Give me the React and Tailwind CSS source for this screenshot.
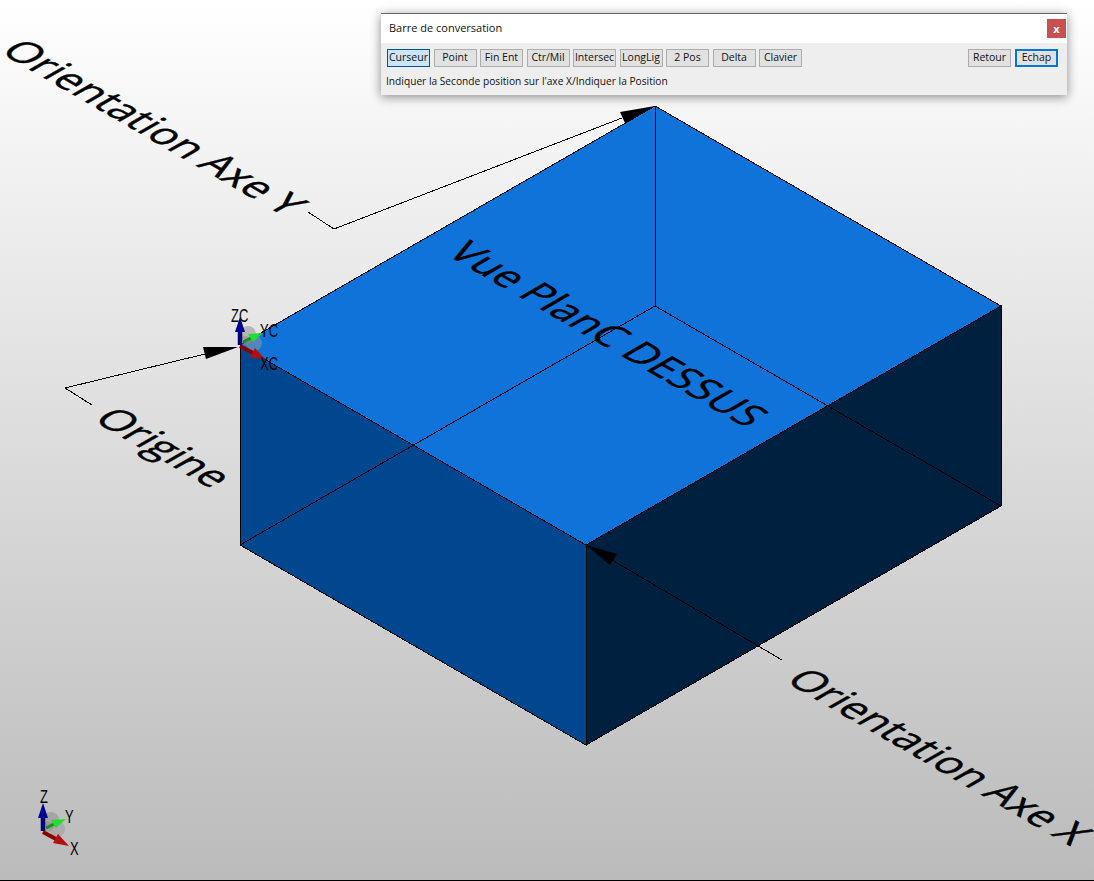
const buttons = ["Point", "Fin Ent", "Ctr/Mil", "Intersec", "LongLig", "2 Pos", "Delta", "Clavier"];

const Btn = ({ label, className = "" }) => (
  <div className={`w-[43px] h-[18px] flex items-center justify-center text-[10.5px] text-[#111] whitespace-nowrap ${className}`}>
    {label}
  </div>
);

const TriadText = ({ x, y, children }) => (
  <text transform={`translate(${x} ${y}) scale(0.72 1)`} fontSize="18" fontFamily="'Liberation Sans', sans-serif" fill="#000">
    {children}
  </text>
);

const Triad = ({ x, y, labels }) => (
  <g transform={`translate(${x} ${y})`}>
    <circle cx="8" cy="-11" r="8" fill="#8a8a8a" opacity="0.5" />
    <circle cx="14" cy="-2" r="8" fill="#9a9a9a" opacity="0.5" />
    <circle cx="5" cy="-4" r="5" fill="#8a8a8a" opacity="0.5" />
    <line x1="0" y1="0" x2="0" y2="-16" stroke="#00007a" strokeWidth="4.5" />
    <polygon points="0,-28 -5,-13 5,-13" fill="#000090" />
    <line x1="3" y1="-3" x2="13" y2="-8" stroke="#149414" strokeWidth="3" />
    <polygon points="23,-12 8,-11 13,-3" fill="#22dd33" />
    <line x1="0" y1="1" x2="13" y2="8" stroke="#8a0000" strokeWidth="4" />
    <polygon points="26,15 10,12 15,3" fill="#b01010" />
    <TriadText x={labels[0].x} y={labels[0].y}>{labels[0].t}</TriadText>
    <TriadText x={labels[1].x} y={labels[1].y}>{labels[1].t}</TriadText>
    <TriadText x={labels[2].x} y={labels[2].y}>{labels[2].t}</TriadText>
  </g>
);

// text lying in the isometric plane of the top face
const Label = ({ x, y, children }) => (
  <text
    transform={`matrix(0.866 0.5 -0.866 0.5 ${x} ${y})`}
    fontSize="40.5"
    fontFamily="'Open Sans', sans-serif"
    fill="#000"
    stroke="#000"
    strokeWidth="0.5"
  >
    {children}
  </text>
);

export default function App() {
  return (
    <div className="relative w-[1094px] h-[881px] overflow-hidden bg-gradient-to-b from-white to-[#bbbbbb] border-b border-black font-['Open_Sans',sans-serif]">
      <svg viewBox="0 0 1094 881" className="block w-[1094px] h-[881px]">
        <g shapeRendering="crispEdges">
          {/* Box faces */}
          <polygon points="240,345 655,106 1001,306 586,545" fill="#0f73da" stroke="#000" />
          <polygon points="240,345 586,545 586,745 240,545" fill="#00478f" stroke="#000" />
          <polygon points="586,545 1001,306 1001,506 586,745" fill="#00203f" stroke="#000" />
          {/* Hidden edges */}
          <line x1="655" y1="106" x2="655" y2="306" stroke="#000" />
          <line x1="655" y1="306" x2="240" y2="545" stroke="#000" />
          <line x1="655" y1="306" x2="1001" y2="506" stroke="#000" />

          {/* Leaders */}
          <polyline points="308,212 334,229 622,118" fill="none" stroke="#000" />
          <polyline points="92,405 65,388 205,354" fill="none" stroke="#000" />
          <polyline points="782,660 612,560" fill="none" stroke="#000" />
        </g>
        <polygon points="655,106 620,112 625,123" fill="#000" />
        <polygon points="238,347 203,347 206,359" fill="#000" />
        <polygon points="586,545 617,554 610,565" fill="#000" />

        <Label x={-1} y={52}>Orientation Axe Y</Label>
        <Label x={92} y={420}>Origine</Label>
        <Label x={784} y={681}>Orientation Axe X</Label>
        <Label x={445} y={254}>Vue PlanC DESSUS</Label>

        <Triad
          x={240}
          y={345}
          labels={[{ t: "ZC", x: -9, y: -23 }, { t: "YC", x: 20, y: -8 }, { t: "XC", x: 20, y: 25 }]}
        />
        <Triad
          x={43}
          y={831}
          labels={[{ t: "Z", x: -3, y: -28 }, { t: "Y", x: 22, y: -8 }, { t: "X", x: 27, y: 24 }]}
        />
      </svg>

      {/* Conversation bar */}
      <div className="absolute left-[381px] top-[13px] w-[686px] h-[82px] bg-[#eeeeee] border-t border-[#666] shadow-[0_2px_10px_rgba(0,0,0,0.45)]">
        <div className="h-[29px] bg-white flex items-center justify-between pl-2 pr-[1px]">
          <span className="text-[11px] text-[#111]">Barre de conversation</span>
          <div className="w-[19px] h-[19px] bg-[#c75050] flex items-center justify-center text-[11px] font-bold text-white leading-none">x</div>
        </div>
        <div className="flex items-center justify-between pl-[6px] pr-[9px] pt-[6px]">
          <div className="flex gap-[3.5px]">
            <Btn label="Curseur" className="bg-[#cce4f7] border border-[#005499]" />
            {buttons.map((b) => (
              <Btn key={b} label={b} className="bg-[#e1e1e1] border border-[#adadad]" />
            ))}
          </div>
          <div className="flex gap-[4px]">
            <Btn label="Retour" className="bg-[#e1e1e1] border border-[#adadad]" />
            <Btn label="Echap" className="bg-[#e1e1e1] border-2 border-[#0078d7]" />
          </div>
        </div>
        <div className="pl-[5px] pt-[8px] text-[10.2px] leading-[13px] text-[#111]">
          Indiquer la Seconde position sur l'axe X/Indiquer la Position
        </div>
      </div>
    </div>
  );
}
